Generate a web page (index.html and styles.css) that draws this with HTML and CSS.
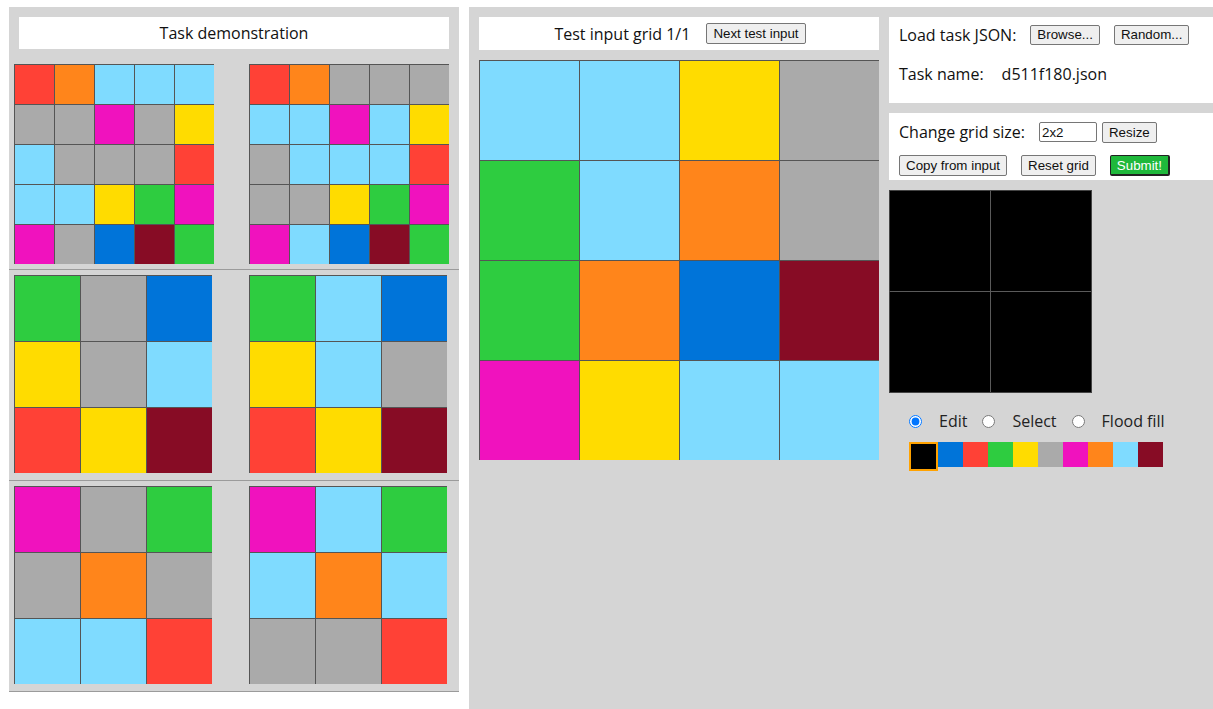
FILE: index.html
```html
<!DOCTYPE html>
<html>
<head>
<meta charset="utf-8">
<title>ARC testing interface</title>
<link rel="stylesheet" href="styles.css">
</head>
<body>
<div class="demo-panel">
  <div class="demo-head">
    <div class="title-box">Task demonstration</div>
  </div>
  <div class="pairs">
    <div class="pair">
      <div class="grid g5">
        <div class="c2"></div><div class="c7"></div><div class="c8"></div><div class="c8"></div><div class="c8"></div>
        <div class="c5"></div><div class="c5"></div><div class="c6"></div><div class="c5"></div><div class="c4"></div>
        <div class="c8"></div><div class="c5"></div><div class="c5"></div><div class="c5"></div><div class="c2"></div>
        <div class="c8"></div><div class="c8"></div><div class="c4"></div><div class="c3"></div><div class="c6"></div>
        <div class="c6"></div><div class="c5"></div><div class="c1"></div><div class="c9"></div><div class="c3"></div>
      </div>
      <div class="grid g5">
        <div class="c2"></div><div class="c7"></div><div class="c5"></div><div class="c5"></div><div class="c5"></div>
        <div class="c8"></div><div class="c8"></div><div class="c6"></div><div class="c8"></div><div class="c4"></div>
        <div class="c5"></div><div class="c8"></div><div class="c8"></div><div class="c8"></div><div class="c2"></div>
        <div class="c5"></div><div class="c5"></div><div class="c4"></div><div class="c3"></div><div class="c6"></div>
        <div class="c6"></div><div class="c8"></div><div class="c1"></div><div class="c9"></div><div class="c3"></div>
      </div>
    </div>
    <div class="pair">
      <div class="grid g3">
        <div class="c3"></div><div class="c5"></div><div class="c1"></div>
        <div class="c4"></div><div class="c5"></div><div class="c8"></div>
        <div class="c2"></div><div class="c4"></div><div class="c9"></div>
      </div>
      <div class="grid g3">
        <div class="c3"></div><div class="c8"></div><div class="c1"></div>
        <div class="c4"></div><div class="c8"></div><div class="c5"></div>
        <div class="c2"></div><div class="c4"></div><div class="c9"></div>
      </div>
    </div>
    <div class="pair">
      <div class="grid g3">
        <div class="c6"></div><div class="c5"></div><div class="c3"></div>
        <div class="c5"></div><div class="c7"></div><div class="c5"></div>
        <div class="c8"></div><div class="c8"></div><div class="c2"></div>
      </div>
      <div class="grid g3">
        <div class="c6"></div><div class="c8"></div><div class="c3"></div>
        <div class="c8"></div><div class="c7"></div><div class="c8"></div>
        <div class="c5"></div><div class="c5"></div><div class="c2"></div>
      </div>
    </div>
  </div>
</div>

<div class="work-panel">
  <div class="test-col">
    <div class="title-box test-title">
      <span>Test input grid 1/1</span>
      <button class="btn">Next test input</button>
    </div>
    <div class="grid g4">
      <div class="c8"></div><div class="c8"></div><div class="c4"></div><div class="c5"></div>
      <div class="c3"></div><div class="c8"></div><div class="c7"></div><div class="c5"></div>
      <div class="c3"></div><div class="c7"></div><div class="c1"></div><div class="c9"></div>
      <div class="c6"></div><div class="c4"></div><div class="c8"></div><div class="c8"></div>
    </div>
  </div>

  <div class="side-col">
    <div class="box load-box">
      <div class="row">
        <span class="label">Load task JSON:</span>
        <button class="btn">Browse...</button>
        <button class="btn">Random...</button>
      </div>
      <div class="row task-row">
        <span>Task name:</span>
        <span class="task-name">d511f180.json</span>
      </div>
    </div>

    <div class="box edit-box">
      <div class="row">
        <span class="label">Change grid size:</span>
        <input class="size-input" type="text" value="2x2">
        <button class="btn resize-btn">Resize</button>
      </div>
      <div class="row row2">
        <button class="btn">Copy from input</button>
        <button class="btn">Reset grid</button>
        <button class="btn submit">Submit!</button>
      </div>
    </div>

    <div class="output-grid">
      <div class="c0"></div><div class="c0"></div>
      <div class="c0"></div><div class="c0"></div>
    </div>

    <div class="tools">
      <input type="radio" name="tool" id="t-edit" checked>
      <label for="t-edit">Edit</label>
      <input type="radio" name="tool" id="t-select">
      <label for="t-select">Select</label>
      <input type="radio" name="tool" id="t-fill">
      <label for="t-fill">Flood fill</label>
    </div>

    <div class="palette">
      <div class="c0 selected"></div>
      <div class="c1"></div>
      <div class="c2"></div>
      <div class="c3"></div>
      <div class="c4"></div>
      <div class="c5"></div>
      <div class="c6"></div>
      <div class="c7"></div>
      <div class="c8"></div>
      <div class="c9"></div>
    </div>
  </div>
</div>
</body>
</html>
```

FILE: styles.css
```css
* {
  box-sizing: border-box;
}

html, body {
  margin: 0;
  background: #fff;
}

body {
  padding: 7px 0 0 9px;
  height: 709px;
  overflow: hidden;
  display: flex;
  align-items: flex-start;
  font-family: "Open Sans", "DejaVu Sans", sans-serif;
  font-size: 16px;
  color: #111;
}

/* colour classes */
.c0 { background: #000000; }
.c1 { background: #0074D9; }
.c2 { background: #FF4136; }
.c3 { background: #2ECC40; }
.c4 { background: #FFDC00; }
.c5 { background: #AAAAAA; }
.c6 { background: #F012BE; }
.c7 { background: #FF851B; }
.c8 { background: #7FDBFF; }
.c9 { background: #870C25; }

/* left panel */
.demo-panel {
  width: 450px;
  flex: none;
  background: #d5d5d5;
}

.demo-head {
  padding: 10px 10px 0;
}

.title-box {
  background: #fff;
  height: 32px;
  display: flex;
  align-items: center;
  justify-content: center;
  font-size: 16px;
  white-space: nowrap;
}

.pairs {
  margin-top: 10px;
}

.pair {
  display: grid;
  grid-template-columns: 235px auto;
  align-items: start;
  box-sizing: content-box;
  height: 200px;
  padding: 5px 0 5px 5px;
  border-bottom: 1px solid #9b9b9b;
}

.grid {
  display: grid;
}

.grid > div {
  border-left: 1px solid #555;
  border-top: 1px solid #555;
}

.g5 {
  grid-template-columns: repeat(5, 40px);
  grid-auto-rows: 40px;
}

.g3 {
  grid-template-columns: repeat(3, 66px);
  grid-auto-rows: 66px;
}

.g4 {
  margin-top: 10px;
  grid-template-columns: repeat(4, 100px);
  grid-auto-rows: 100px;
}

/* right work panel */
.work-panel {
  flex: 1;
  min-width: 0;
  margin-left: 10px;
  height: 702px;
  background: #d5d5d5;
  padding: 10px 0 0 10px;
  display: flex;
  align-items: flex-start;
  gap: 10px;
}

.test-col {
  width: 400px;
  flex: none;
}

.test-title {
  height: 33px;
  gap: 16px;
  padding-left: 2px;
}

.btn {
  font-family: "Liberation Sans", Arial, sans-serif;
  font-size: 13.333px;
  color: #111;
  background: #efefef;
  border: 1px solid #767676;
  border-radius: 2px;
  padding: 1px 6px;
  height: 21px;
  line-height: 17px;
  margin: 0;
  white-space: nowrap;
  flex: none;
}

.side-col {
  flex: 1;
  min-width: 0;
}

.box {
  background: #fff;
  padding: 0 10px;
}

.row {
  display: flex;
  align-items: center;
  white-space: nowrap;
}

.row > * {
  flex: none;
}

.load-box {
  height: 86px;
  padding-top: 7px;
}

.load-box .row:first-child .label {
  margin-right: 14px;
}

.load-box .row:first-child .btn {
  height: 20px;
  line-height: 16px;
  margin-right: 14px;
}

.task-row {
  margin-top: 17px;
  height: 22px;
}

.task-name {
  margin-left: 18px;
}

.edit-box {
  margin-top: 10px;
  height: 67px;
  padding-top: 8px;
}

.edit-box .label {
  margin-right: 14px;
}

.size-input {
  width: 58px;
  height: 20px;
  font-family: "Liberation Sans", Arial, sans-serif;
  font-size: 13.333px;
  padding: 1px 2px;
  border: 1px solid #767676;
  border-radius: 2px;
  margin: 0 5px 0 0;
  color: #111;
}

.row2 {
  margin-top: 12px;
  gap: 14px;
}

.submit {
  background: #1fb83b;
  color: #fff;
  border: 1px solid #222;
  border-right-width: 2px;
  border-bottom-width: 2px;
}

.output-grid {
  margin-top: 10px;
  display: grid;
  grid-template-columns: repeat(2, 101px);
  grid-auto-rows: 101px;
  width: 203px;
  border-right: 1px solid #444;
  border-bottom: 1px solid #444;
}

.output-grid > div {
  border-left: 1px solid #444;
  border-top: 1px solid #444;
}

.output-grid > div:nth-child(2n) {
  border-left-color: #5a5a5a;
}

.output-grid > div:nth-child(n+3) {
  border-top-color: #5a5a5a;
}

.tools {
  display: flex;
  align-items: center;
  margin-top: 18px;
  padding-left: 20px;
  height: 20px;
  color: #222;
  white-space: nowrap;
}

.tools input {
  margin: 0 17px 0 0;
  width: 13px;
  height: 13px;
  flex: none;
}

.tools label {
  margin-right: 15px;
}

.palette {
  display: flex;
  align-items: flex-start;
  margin-top: 11px;
  margin-left: 20px;
}

.palette > div {
  width: 25px;
  height: 25px;
  flex: none;
}

.palette > .selected {
  box-sizing: content-box;
  width: 25px;
  height: 25px;
  border: 2px solid #ffa200;
}
```
